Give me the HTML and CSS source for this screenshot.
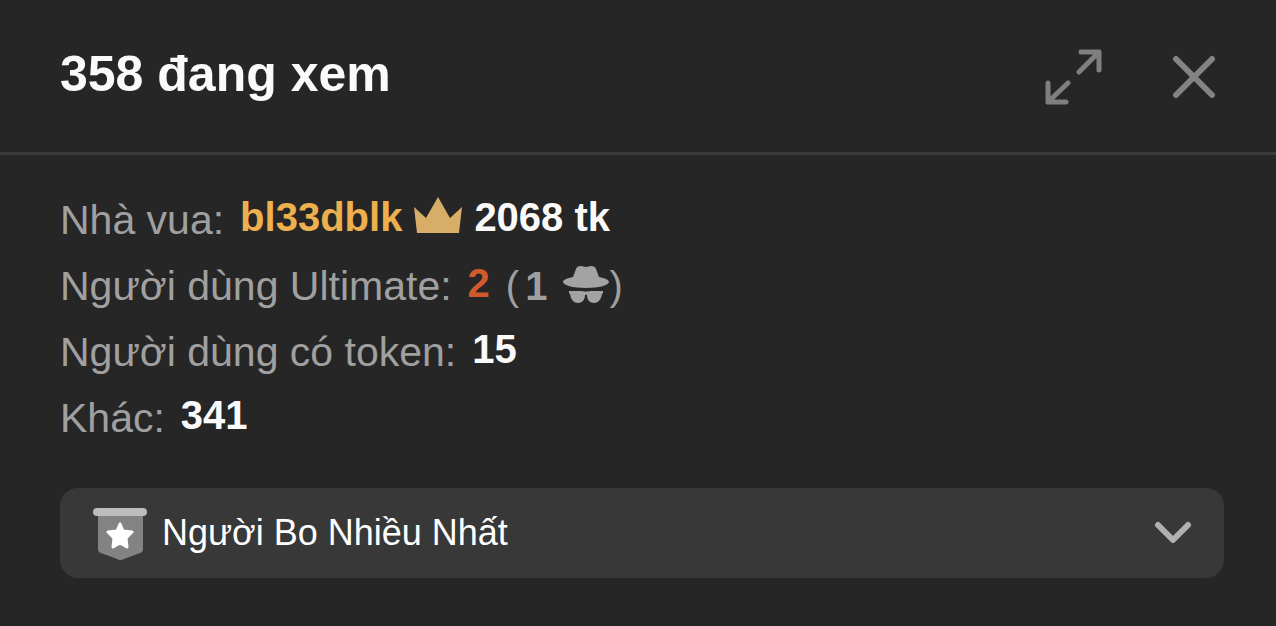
FILE: index.html
```html
<!DOCTYPE html>
<html lang="vi">
<head>
<meta charset="utf-8">
<meta name="viewport" content="width=device-width, initial-scale=1">
<title>358 đang xem</title>
<link rel="stylesheet" href="styles.css">
</head>
<body>
<section class="viewers">
  <header class="viewers-header">
    <h1 class="viewers-title">358 đang xem</h1>
    <div class="viewers-actions">
      <button class="icon-button" type="button" aria-label="Mở rộng">
        <svg width="58" height="58" viewBox="0 0 58 58" fill="none" stroke="#7f7f7f" stroke-width="5" stroke-linecap="round" stroke-linejoin="round" aria-hidden="true">
          <path d="M37 4h18v18M55 4L35 24M4 35v19h18M4 54l20-19"/>
        </svg>
      </button>
      <button class="icon-button" type="button" aria-label="Đóng">
        <svg width="44" height="44" viewBox="0 0 44 44" fill="none" stroke="#838383" stroke-width="6" stroke-linecap="round" aria-hidden="true">
          <path d="M4 4l36 36M40 4L4 40"/>
        </svg>
      </button>
    </div>
  </header>
  <div class="viewers-body">
    <dl class="stats">
      <div class="stat">
        <dt class="stat-label">Nhà vua:</dt>
        <dd class="stat-value">
          <span class="king">bl33dblk</span>
          <svg class="stat-icon" width="48" height="36" viewBox="0 0 48 36" fill="#d7ad68" aria-hidden="true"><path d="M0 10l12 11L24 0l12 21L48 10l-3 26H3z"/></svg>
          <span>2068 tk</span>
        </dd>
      </div>
      <div class="stat">
        <dt class="stat-label">Người dùng Ultimate:</dt>
        <dd class="stat-value ultimate">2</dd>
        <dd class="stat-note"><span>(</span><b class="hidden-count">1</b>
          <svg class="stat-icon" width="46" height="37" viewBox="0 0 46 37" fill="#a3a3a3" role="img" aria-label="ẩn danh"><path d="M10 11L13 3Q14 0 18 0l5 1 5-1q4 0 5 3l3 8c6 1 10 3 10 5 0 3-10 6-23 6S0 19 0 16c0-2 4-4 10-5z"/><path d="M6 25h13q4 1 8 0h13v2l-1 1c-1 6-4 9-8 9-5 0-7-4-7-8q-1-1-2 0c0 4-2 8-7 8-4 0-7-3-8-9l-1-1z"/></svg><span>)</span>
        </dd>
      </div>
      <div class="stat">
        <dt class="stat-label">Người dùng có token:</dt>
        <dd class="stat-value">15</dd>
      </div>
      <div class="stat">
        <dt class="stat-label">Khác:</dt>
        <dd class="stat-value">341</dd>
      </div>
    </dl>
    <button class="top-tippers" type="button" aria-expanded="false">
      <svg width="56" height="54" viewBox="0 0 56 54" aria-hidden="true">
        <path fill="#838383" d="M6 5h45v38q0 3-3 4l-16 6q-4 2-7 0L9 47q-3-1-3-4z"/>
        <rect x="1" y="2" width="54" height="8" rx="4" fill="#bdbdbd"/>
        <path fill="#fff" stroke="#fff" stroke-width="3" stroke-linejoin="round" d="M28 18l3 7 9 1-6 6 1 9-7-4-7 4 1-9-6-6 9-1z"/>
      </svg>
      <span class="top-tippers-label">Người Bo Nhiều Nhất</span>
      <svg width="38" height="24" viewBox="0 0 38 24" fill="none" stroke="#b0b0b0" stroke-width="6" stroke-linecap="round" stroke-linejoin="round" aria-hidden="true"><path d="M4 4l15 15L34 4"/></svg>
    </button>
  </div>
</section>
</body>
</html>
```
FILE: styles.css
```css
* {
  box-sizing: border-box;
}

body {
  margin: 0;
  background: #262626;
  color: #fafafa;
  font-family: "Liberation Sans", Arial, Helvetica, sans-serif;
}

.viewers-header {
  display: flex;
  align-items: center;
  justify-content: space-between;
  padding: 44px 60px 48px;
  border-bottom: 3px solid #3b3b3b;
}

.viewers-title {
  margin: 0;
  font-size: 50px;
  line-height: 60px;
}

.viewers-actions {
  display: flex;
  align-items: center;
  gap: 70px;
  height: 60px;
  padding-top: 6px;
}

.icon-button {
  display: flex;
  padding: 0;
  border: 0;
  background: none;
}

.viewers-body {
  padding: 32px 52px 48px 60px;
}

.stats {
  margin: 0;
}

.stat {
  display: flex;
  align-items: flex-start;
  gap: 16px;
  font-size: 41px;
  line-height: 66px;
}

.stat-label,
.stat-note {
  color: #a0a0a0;
}

.stat-value,
.stat-note {
  display: flex;
  align-items: center;
  margin: 0;
  font-size: 40px;
}

.stat-value {
  gap: 12px;
  font-weight: bold;
  line-height: 60px;
}

.stat-icon {
  margin-bottom: 4px;
}

.king {
  color: #edb04f;
}

.ultimate {
  color: #d05a2b;
}

.hidden-count {
  padding: 0 16px 0 6px;
}

.top-tippers {
  display: flex;
  align-items: center;
  gap: 14px;
  width: 100%;
  min-height: 90px;
  margin-top: 37px;
  padding: 0 32px;
  border: 0;
  border-radius: 18px;
  background: #383838;
  color: #fff;
  font-family: inherit;
  font-size: 36px;
  text-align: left;
}

.top-tippers-label {
  flex: 1;
}
```
